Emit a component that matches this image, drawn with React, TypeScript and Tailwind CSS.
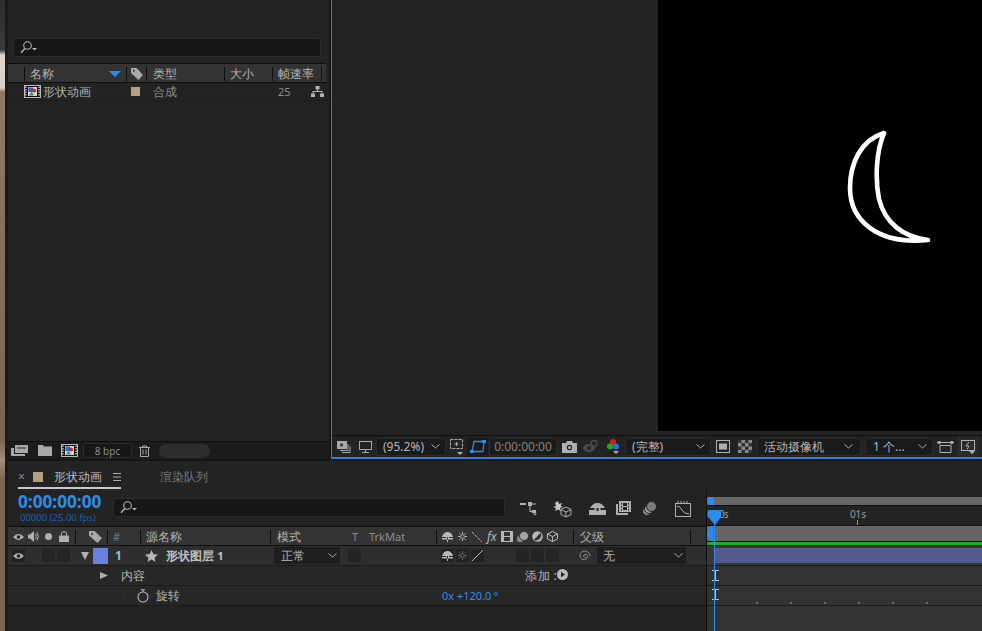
import React from "react";

const FONT = "font-['Noto_Sans','Noto_Sans_CJK_SC',sans-serif]";

function Sep() {
  return <div className="w-px h-[14px] bg-[#0e0e0e] shrink-0" />;
}

function Search({ className }: { className: string }) {
  return (
    <div className={"flex items-center pl-[6px] bg-[#171717] border border-[#2c2c2c] rounded-[3px] " + className}>
      <svg width="17" height="13" viewBox="0 0 17 13" fill="none" stroke="#b5b5b5" strokeWidth="1.1">
        <circle cx="7.5" cy="4.5" r="3.8" />
        <path d="M4.8 7.5 1 11.800" strokeWidth="1.4" />
        <path d="M12 7h5l-2.500 2.500z" fill="#b5b5b5" stroke="none" />
      </svg>
    </div>
  );
}

function Film() {
  return (
    <svg width="17" height="13" viewBox="0 0 17 13" className="shrink-0">
      <rect x="0.5" y="0.5" width="16" height="12" fill="#111" stroke="#b9b9b9" />
      <path d="M1.800 1.500v10M15.200 1.500v10" stroke="#b9b9b9" strokeWidth="1.600" strokeDasharray="1.500 1" />
      <rect x="4" y="2" width="9" height="9" fill="#d8d8d8" />
      <rect x="4.500" y="2.500" width="4.500" height="4.500" fill="#2a63c9" />
      <circle cx="10" cy="5.500" r="2.100" fill="#cc2b2b" />
      <path d="M5 10.500l2.500-4 2.500 4z" fill="#2c9c3c" />
    </svg>
  );
}

function Chevron({ color = "#a8a8a8" }: { color?: string }) {
  return (
    <svg width="9" height="5" viewBox="0 0 9 5" fill="none" stroke={color} strokeWidth="1" className="shrink-0">
      <path d="M.5.5l4 3.500 4-3.500" />
    </svg>
  );
}

function ProjectPanel() {
  return (
    <div className="w-[321px] shrink-0 flex flex-col bg-[#232323]">
      <div className="h-[38px] shrink-0" />
      <div className="px-[5px]">
        <Search className="h-[19px] w-[308px]" />
      </div>
      <div className="mt-[6px] mr-[3px] h-[20px] pt-[1px] shrink-0 flex items-center bg-[#333333] border-y border-[#0f0f0f] text-[12px] text-[#b4b4b4]">
        <div className="w-[17px] shrink-0 flex justify-end"><Sep /></div>
        <div className="w-[84px] shrink-0 pl-[5px] leading-none">名称</div>
        <svg width="12" height="6" viewBox="0 0 12 6" className="shrink-0 mr-[5px]"><path d="M0 0h12L6 6z" fill="#2d8ceb" /></svg>
        <Sep />
        <svg width="13" height="12" viewBox="0 0 13 12" className="ml-[3px] shrink-0"><path d="M1 0h5.500l6.500 7-4.500 5L1 5z" fill="#aaa" /><circle cx="3.800" cy="2.800" r="1" fill="#333" /></svg>
        <div className="ml-[3px]"><Sep /></div>
        <div className="w-[77px] shrink-0 pl-[6px] leading-none">类型</div>
        <Sep />
        <div className="w-[47px] shrink-0 pl-[5px] leading-none">大小</div>
        <Sep />
        <div className="w-[48px] shrink-0 pl-[5px] leading-none whitespace-nowrap">帧速率</div>
        <Sep />
      </div>
      <div className="h-[18px] shrink-0 flex items-center border-b border-[#1d1d1d] text-[12px] text-[#b0b0b0]">
        <div className="ml-[16px] shrink-0 flex"><Film /></div>
        <div className="w-[88px] ml-[2px] leading-none">形状动画</div>
        <div className="w-[9px] h-[9px] bg-[#b3a17f] shrink-0" />
        <div className="ml-[13px] w-[125px] text-[#8a8a8a] leading-none">合成</div>
        <div className="w-[33px] text-[11px] text-[#8d8d8d] leading-none">25</div>
        <svg width="13" height="11" viewBox="0 0 13 11" fill="#b4b4b4"><rect x="4.500" y="0" width="4" height="3.500" /><rect x="0" y="7.500" width="4" height="3.500" /><rect x="9" y="7.500" width="4" height="3.500" /><path d="M6 3.500h1V5h4.500v2.500h-1V6h-8v1.500h-1V5H6z" /></svg>
      </div>
      <div className="flex-1" />
      <div className="h-px bg-[#0f0f0f] shrink-0" />
      <div className="h-[17px] shrink-0 flex items-center bg-[#1c1c1c]">
        <svg width="17" height="11" viewBox="0 0 17 11" className="ml-[3px]" fill="#a8a8a8"><rect x="4" y="0" width="13" height="8" /><rect x="6" y="2.500" width="9" height="1" fill="#222" /><rect x="0" y="3" width="3" height="8" /><rect x="3" y="9" width="11" height="2" /></svg>
        <svg width="14" height="11" viewBox="0 0 14 11" className="ml-[10px]" fill="#a8a8a8"><path d="M0 0h5l1 1.500h8V11H0z" /></svg>
        <div className="ml-[9px] flex"><Film /></div>
        <div className="ml-[5px] w-[49px] h-[15px] rounded-[2px] bg-[#171717] border border-[#2c2c2c] text-[10px] leading-none text-[#8b8b8b] flex items-center justify-center">8 bpc</div>
        <svg width="11" height="12" viewBox="0 0 11 12" className="ml-[7px]" fill="none" stroke="#a8a8a8" strokeWidth="1"><path d="M0 2.500h11M3.500 2.500V1h4v1.500M1.500 2.500v9h8v-9M4 4.500v5M7 4.500v5" /></svg>
        <div className="ml-[9px] w-[51px] h-[14px] rounded-full bg-[#2e2e2e]" />
      </div>
    </div>
  );
}

function ToolBox({ className, children }: { className: string; children?: React.ReactNode }) {
  return (
    <div className={"h-[18px] shrink-0 rounded-[3px] bg-[#1b1b1b] border border-[#2b2b2b] flex items-center text-[12px] leading-none " + className}>
      {children}
    </div>
  );
}

function ViewerToolbar() {
  return (
    <div className="h-[24px] shrink-0 flex items-center bg-[#232323] border-t border-[#0f0f0f] border-b-2 border-b-[#2d7fd8]">
      <svg width="14" height="12" viewBox="0 0 14 12" className="ml-[5px] shrink-0" fill="none" stroke="#a8a8a8"><rect x=".5" y=".5" width="9" height="7" fill="#a8a8a8" /><path d="M11 3v6.500H3M13 5v6.500H5" /><path d="M3.500 2l3 2-3 2z" fill="#222" stroke="none" /></svg>
      <svg width="13" height="12" viewBox="0 0 13 12" className="ml-[8px] shrink-0" fill="none" stroke="#a8a8a8"><rect x=".5" y=".5" width="12" height="8" /><path d="M6.500 9v2M3 11.500h7" /></svg>
      <ToolBox className="ml-[4px] w-[70px] text-[#b6b6b6] justify-between pl-[6px] pr-[5px]"><span>(95.2%)</span><Chevron /></ToolBox>
      <svg width="15" height="17" viewBox="0 0 15 17" className="ml-[3px] shrink-0" fill="none" stroke="#b0b0b0"><rect x="1.500" y="1.500" width="12" height="9" strokeDasharray="3 1" /><path d="M7.500 4v4M5.500 6h4" /><path d="M8 14h6l-3 3z" fill="#b0b0b0" stroke="none" /></svg>
      <div className="ml-[3px] w-[21px] h-[20px] bg-[#1b1b1b] rounded-[2px] flex items-center justify-center shrink-0">
        <svg width="16" height="13" viewBox="0 0 16 13" fill="none" stroke="#2d8ceb" strokeWidth="1.300"><path d="M4 1.500h10L13 11.500H2z" /><path d="M0 10h4v3H0zM12 0h4v3h-4z" fill="#2d8ceb" stroke="none" /></svg>
      </div>
      <ToolBox className="ml-[1px] w-[68px] justify-center text-[#8a8174] text-[12px]">0:00:00:00</ToolBox>
      <svg width="15" height="12" viewBox="0 0 15 12" className="ml-[5px] shrink-0"><path d="M0 2h4l1-2h5l1 2h4v10H0z" fill="#b0b0b0" /><circle cx="7.500" cy="6.500" r="2.700" fill="#232323" /><circle cx="7.500" cy="6.500" r="1.500" fill="#b0b0b0" /></svg>
      <svg width="15" height="13" viewBox="0 0 15 13" className="ml-[6px] shrink-0"><ellipse cx="6" cy="8" rx="6" ry="4" fill="#4a4a4a" /><circle cx="6" cy="8" r="2" fill="#232323" /><circle cx="11" cy="3.500" r="3" fill="none" stroke="#4a4a4a" strokeWidth="1.500" /></svg>
      <svg width="12" height="15" viewBox="0 0 12 15" className="ml-[9px] shrink-0"><circle cx="6" cy="3" r="3" fill="#d81f1f" /><circle cx="3" cy="7.500" r="3" fill="#1eb01e" /><circle cx="9" cy="7.500" r="3" fill="#2e6fdc" /><path d="M6 12h6l-3 3z" fill="#b0b0b0" /></svg>
      <ToolBox className="ml-[6px] w-[86px] text-[#b6b6b6] justify-between pl-[6px] pr-[5px]"><span>(完整)</span><Chevron /></ToolBox>
      <svg width="14" height="13" viewBox="0 0 14 13" className="ml-[5px] shrink-0"><rect x=".5" y=".5" width="13" height="12" fill="none" stroke="#b0b0b0" /><rect x="3" y="3.500" width="8" height="6" fill="#b0b0b0" /></svg>
      <svg width="14" height="13" viewBox="0 0 14 13" className="ml-[8px] shrink-0"><rect width="14" height="13" fill="#8a8a8a" /><path d="M0 0h3.500v3H0zM7 0h3.500v3H7zM3.500 3H7v3.500H3.500zM10.500 3H14v3.500h-3.500zM0 6.500h3.500V10H0zM7 6.500h3.500V10H7zM3.500 10H7v3H3.500zM10.500 10H14v3h-3.500z" fill="#333" /></svg>
      <ToolBox className="ml-[5px] w-[104px] text-[#b6b6b6] justify-between pl-[6px] pr-[7px]"><span>活动摄像机</span><Chevron /></ToolBox>
      <ToolBox className="ml-[4px] w-[68px] text-[#b6b6b6] justify-between pl-[7px] pr-[5px]"><span>1 个...</span><Chevron /></ToolBox>
      <svg width="17" height="12" viewBox="0 0 17 12" className="ml-[4px] shrink-0" fill="none" stroke="#b0b0b0"><path d="M2 1.500h13M3 4.500h11v7H3z" /><path d="M0 1.500L3 0v3zM17 1.500L14 0v3z" fill="#b0b0b0" /></svg>
      <div className="ml-[4px] w-[20px] h-[20px] bg-[#2b2b2b] flex items-center justify-center shrink-0">
        <svg width="15" height="14" viewBox="0 0 15 14" fill="none" stroke="#b0b0b0"><rect x=".5" y=".5" width="13" height="10" /><path d="M8 2L5 6h3l-2 3.500" /><path d="M8 11h6l-3 3z" fill="#b0b0b0" stroke="none" /></svg>
      </div>
    </div>
  );
}

function Viewer() {
  return (
    <div className="flex-1 min-w-0 flex flex-col border-l border-[#2d7fd8] bg-[#232323] ml-[2px]">
      <div className="flex-1 min-h-0 flex justify-end items-stretch">
        <div className="w-[324px] bg-black flex items-start">
          <svg width="90" height="120" viewBox="0 0 90 120" className="ml-[185px] mt-[127px] shrink-0 blur-[0.5px]" fill="none" stroke="#fff" strokeWidth="4.600" strokeLinecap="round" strokeLinejoin="round">
            <path d="M41 6 C18 13 7 36 7 61 C7 93 34 118 85 113 C60 110 42 96 36 72 C32 52 33 25 41 6 Z" />
          </svg>
        </div>
      </div>
      <div className="h-[4px] shrink-0" />
      <ViewerToolbar />
    </div>
  );
}

function TimelineTabs() {
  return (
    <div className="h-[28px] shrink-0 flex bg-[#232323] text-[12px]">
      <div className="ml-[10px] w-[103px] h-[28px] pt-[6px] shrink-0 flex items-center border-b-2 border-[#c8c8c8]">
        <span className="w-[15px] text-[12px] leading-none text-[#8a8a8a]">×</span>
        <div className="w-[10px] h-[10px] bg-[#b3a17f] shrink-0" />
        <div className="ml-[11px] w-[48px] leading-none text-[#bdbdbd] whitespace-nowrap">形状动画</div>
        <svg width="8" height="8" viewBox="0 0 8 8" className="ml-[11px] shrink-0" stroke="#aaa"><path d="M0 .5h8M0 4h8M0 7.500h8" /></svg>
      </div>
      <div className="ml-[39px] pt-[10px] leading-[12px] text-[#777]">渲染队列</div>
    </div>
  );
}

function TimeRow() {
  return (
    <div className="h-[38px] shrink-0 flex border-b border-[#0f0f0f]">
      <div className="w-[105px] shrink-0 flex flex-col pl-[10px]">
        <div className="mt-[3px] text-[17.200px] font-bold leading-[20px] text-[#2d8ceb] font-['Liberation_Serif',serif] whitespace-nowrap">0:00:00:00</div>
        <div className="ml-[2px] text-[9.500px] leading-[12px] text-[#1f5fa8] whitespace-nowrap">00000 (25.00 fps)</div>
      </div>
      <Search className="h-[19px] w-[392px] mt-[9px] shrink-0" />
      <div className="flex items-start pt-[12px]">
        <svg width="18" height="15" viewBox="0 0 18 15" className="ml-[15px] shrink-0" fill="#b0b0b0"><path d="M0 2h6v2H0zM8 1h4v4H8zM12 2.500h4v1h-4zM9.500 5h1v5h1.500v1H9.500zM12 9h4v3h-4z" /><path d="M13 12.500h4l-2 2z" /></svg>
        <svg width="19" height="17" viewBox="0 0 19 17" className="ml-[15px] shrink-0" fill="none" stroke="#b0b0b0"><path d="M5 0l1 3 3-1-1.500 3 2.500 1-3 1 1 3-3-1.500L2 10l1-3-3-1 3-1-1-3z" fill="#c8c8c8" stroke="none" /><path d="M13 6l5 2.500v5L13 16l-5-2.500v-5zM8 8.500l5 2.500 5-2.500M13 11v5" /></svg>
        <svg width="17" height="13" viewBox="0 0 17 13" className="ml-[17px] mt-[1px] shrink-0" fill="#b0b0b0"><path d="M0 8h5.500V6H1q3-5 7.500-5T16 6h-4.500v2H17v5H0zM7.500 6v3h2V6z" /></svg>
        <svg width="15" height="14" viewBox="0 0 15 14" className="ml-[10px] shrink-0" fill="#b0b0b0"><path d="M3 0h12v11H3z" /><path d="M0 3h2v9h10v2H0z" /><path d="M5 2h1v1.500H5zM5 5h1v1.500H5zM5 8h1v1.500H5zM12 2h1v1.500h-1zM12 5h1v1.500h-1zM12 8h1v1.500h-1zM7 2h4v3H7zM7 6h4v3H7z" fill="#232323" /></svg>
        <svg width="15" height="15" viewBox="0 0 15 15" className="ml-[11px] shrink-0" stroke="#232323"><circle cx="5" cy="10" r="4.500" fill="#8a8a8a" /><circle cx="7" cy="8" r="4.500" fill="#a0a0a0" /><circle cx="9.500" cy="5.500" r="5" fill="#7d7d7d" /></svg>
        <svg width="16" height="16" viewBox="0 0 16 16" className="ml-[18px] shrink-0" fill="none" stroke="#b0b0b0"><rect x=".5" y="2.500" width="15" height="13" /><path d="M2 5q3 0 5 4t7 4" /><path d="M3 0v2M6 0v2M9 0v2M12 0v2" /></svg>
      </div>
    </div>
  );
}

function Eye({ color = "#b0b0b0" }: { color?: string }) {
  return (
    <svg width="11" height="8" viewBox="0 0 11 8" className="shrink-0"><path d="M0 4q5.500-6 11 0-5.500 6-11 0z" fill={color} /><circle cx="5.500" cy="4" r="1.800" fill="#222" /></svg>
  );
}

function Tile({ className = "" }: { className?: string }) {
  return <div className={"w-[13px] h-[13px] bg-[#242424] shrink-0 " + className} />;
}

function Pyramid({ color = "#b8b8b8" }: { color?: string }) {
  return (
    <svg width="11" height="10" viewBox="0 0 11 10" fill={color} className="shrink-0"><path d="M0 5q1.500-5 5.500-5t5.500 5H7v1h4v1.500H0V6h4V5zM5 5v5h1V5z" /></svg>
  );
}

function Gear({ color = "#b8b8b8" }: { color?: string }) {
  return (
    <svg width="9" height="9" viewBox="0 0 9 9" className="shrink-0" stroke={color} fill="none"><circle cx="4.500" cy="4.500" r="1.800" /><path d="M4.500 0v2M4.500 7v2M0 4.500h2M7 4.500h2M1.300 1.300l1.200 1.200M6.500 6.500l1.200 1.200M1.300 7.700l1.200-1.200M6.500 2.500l1.200-1.200" /></svg>
  );
}

function TimelineLeft() {
  return (
    <div className="w-[698px] shrink-0 flex flex-col text-[12px] text-[#b4b4b4]">
      <TimeRow />
      <div className="h-[19px] pt-[1px] shrink-0 flex items-center bg-[#333333] border-b border-[#0f0f0f]">
        <div className="ml-[5px] flex"><Eye /></div>
        <svg width="11" height="11" viewBox="0 0 11 11" className="ml-[4px] shrink-0" fill="#b0b0b0"><path d="M0 3.500h2L6 0v11L2 7.500H0z" /><path d="M7.500 3q1.500 2.500 0 5M9 1.500q2.500 4 0 8" fill="none" stroke="#b0b0b0" /></svg>
        <div className="ml-[6px] w-[7px] h-[7px] rounded-full bg-[#b0b0b0] shrink-0" />
        <svg width="10" height="11" viewBox="0 0 10 11" className="ml-[7px] shrink-0" fill="#b0b0b0"><rect y="4.500" width="10" height="6.500" /><path d="M2.500 4.500V3a2.500 2.500 0 015 0v1.500" fill="none" stroke="#b0b0b0" /></svg>
        <div className="ml-[6px]"><Sep /></div>
        <svg width="13" height="12" viewBox="0 0 13 12" className="ml-[13px] shrink-0" fill="#a8a8a8"><path d="M0 0h5.500l7.500 7-4.500 5L0 4.500z" /><circle cx="3" cy="3" r="1" fill="#333" /></svg>
        <div className="ml-[5px]"><Sep /></div>
        <div className="ml-[5px] w-[27px] shrink-0 text-[11px] leading-none text-[#6d87a0]">#</div>
        <Sep />
        <div className="ml-[5px] w-[124px] shrink-0 leading-none">源名称</div>
        <Sep />
        <div className="ml-[6px] w-[75px] shrink-0 leading-none">模式</div>
        <div className="text-[11px] leading-none w-[17px] shrink-0 text-[#8d8d8d]">T</div>
        <div className="w-[67px] shrink-0 text-[11px] leading-none text-[#8d8d8d]">TrkMat</div>
        <Sep />
        <div className="ml-[5px]"><Pyramid /></div>
        <div className="ml-[5px]"><Gear /></div>
        <svg width="10" height="10" viewBox="0 0 10 10" className="ml-[5px] shrink-0" stroke="#b8b8b8" strokeDasharray="3 1"><path d="M0 0l10 10" /></svg>
        <span className="ml-[5px] w-[11px] shrink-0 text-[12px] leading-none italic text-[#b4b4b4] font-['Liberation_Serif',serif]">fx</span>
        <svg width="12" height="11" viewBox="0 0 12 11" className="ml-[3px] shrink-0" fill="#b8b8b8"><path d="M0 0h12v11H0z" /><path d="M3 1h6v4H3zM3 6h6v4H3z" fill="#333" /></svg>
        <svg width="13" height="12" viewBox="0 0 13 12" className="ml-[3px] shrink-0" stroke="#333"><circle cx="4" cy="8" r="3.800" fill="#8a8a8a" /><circle cx="8" cy="5" r="4.500" fill="#a5a5a5" /></svg>
        <svg width="11" height="11" viewBox="0 0 11 11" className="ml-[3px] shrink-0"><circle cx="5.500" cy="5.500" r="5.200" fill="#b8b8b8" /><path d="M8.500 1.800A5.200 5.200 0 011.800 9z" fill="#333" /></svg>
        <svg width="11" height="11" viewBox="0 0 11 11" className="ml-[4px] shrink-0" fill="none" stroke="#b8b8b8"><path d="M5.500 .5l5 2.500v5l-5 2.500-5-2.500V3zM.5 3l5 2.500 5-2.500M5.500 5.500v5.500" /></svg>
        <div className="ml-[15px]"><Sep /></div>
        <div className="ml-[6px] w-[110px] shrink-0 leading-none">父级</div>
        <Sep />
      </div>
      <div className="h-[20px] shrink-0 flex items-center bg-[#2e2e2e] border-b border-[#1b1b1b]">
        <div className="ml-[4px] w-[13px] h-[13px] bg-[#222] flex items-center justify-center shrink-0"><Eye /></div>
        <Tile className="ml-[17px]" />
        <Tile className="ml-[2px]" />
        <svg width="8" height="8" viewBox="0 0 8 8" className="ml-[11px] shrink-0"><path d="M0 0h8L4 8z" fill="#b0b0b0" /></svg>
        <div className="ml-[4px] w-[15px] h-[16px] bg-[#6a81de] shrink-0" />
        <div className="ml-[7px] w-[23px] shrink-0 text-[12px] leading-none font-bold text-[#a8b4c2] font-['Liberation_Serif',serif]">1</div>
        <svg width="13" height="12" viewBox="0 0 12 11" className="ml-[7px] shrink-0"><path d="M6 0l1.800 3.800 4.200.4-3.200 2.800L9.700 11 6 8.800 2.300 11l.9-4L0 4.200l4.200-.4z" fill="#b8b8b8" /></svg>
        <div className="ml-[8px] w-[108px] shrink-0 leading-none font-bold text-[#c0c0c0] whitespace-nowrap">形状图层 <span className="text-[11px]">1</span></div>
        <div className="w-[66px] h-[17px] bg-[#1f1f1f] flex items-center justify-between pl-[7px] pr-[3px] shrink-0 leading-none"><span>正常</span><Chevron /></div>
        <Tile className="ml-[8px]" />
        <div className="w-[80px] shrink-0" />
        <div className="w-[13px] h-[13px] bg-[#222] flex items-center justify-center shrink-0"><Pyramid /></div>
        <div className="ml-[2px] w-[13px] h-[13px] bg-[#222] flex items-center justify-center shrink-0"><Gear color="#6a6a6a" /></div>
        <div className="ml-[2px] w-[13px] h-[13px] bg-[#222] flex items-center justify-center shrink-0">
          <svg width="11" height="11" viewBox="0 0 11 11" stroke="#b8b8b8"><path d="M0 11L11 0" /></svg>
        </div>
        <Tile className="ml-[32px]" />
        <Tile className="ml-[2px]" />
        <Tile className="ml-[2px]" />
        <svg width="12" height="12" viewBox="0 0 12 12" className="ml-[20px] shrink-0" fill="none" stroke="#8f8f8f"><path d="M6.500 7.500a1.500 1.500 0 01-1.500-2.500c1-1.300 3.500-.5 3.500 1.500 0 2.300-2.500 3.500-4.500 3C2 9 .8 7 1 5 1.300 2.500 3.500.8 6 1c2.500.2 4.800 2 5 5" /></svg>
        <div className="ml-[6px] w-[89px] h-[17px] bg-[#1f1f1f] flex items-center justify-between pl-[6px] pr-[3px] shrink-0 leading-none"><span>无</span><Chevron /></div>
      </div>
      <div className="h-[20px] shrink-0 flex items-center border-b border-[#1b1b1b] bg-[#272727]">
        <svg width="8" height="7" viewBox="0 0 8 7" className="ml-[92px] shrink-0"><path d="M0 0l8 3.500L0 7z" fill="#b0b0b0" /></svg>
        <div className="ml-[13px] w-[404px] shrink-0 leading-none">内容</div>
        <span className="w-[32px] shrink-0 leading-none whitespace-nowrap tracking-[0.5px]">添加 :</span>
        <svg width="11" height="11" viewBox="0 0 11 11" className="shrink-0 mb-[3px]"><circle cx="5.500" cy="5.500" r="5.500" fill="#bbb" /><path d="M4 2.800l4 2.700-4 2.700z" fill="#222" /></svg>
      </div>
      <div className="h-[20px] shrink-0 flex items-center border-b border-[#1b1b1b] bg-[#272727]">
        <div className="ml-[115px] w-[2px] h-px bg-[#3a3a3a] shrink-0" />
        <svg width="12" height="14" viewBox="0 0 12 14" className="ml-[12px] shrink-0" fill="none" stroke="#b8b8b8" strokeWidth="1.100"><circle cx="6" cy="8" r="5" /><path d="M4 .8h4M6 3V.8" /></svg>
        <div className="ml-[7px] w-[286px] shrink-0 leading-none">旋转</div>
        <div className="text-[11px] leading-none text-[#2d8ceb] whitespace-nowrap">0x +120.0<span className="ml-[2px]">°</span></div>
      </div>
      <div className="flex-1" />
    </div>
  );
}

function IBeam() {
  return (
    <svg width="7" height="11" viewBox="0 0 7 11" stroke="#c0c0c0" fill="none" className="shrink-0"><path d="M0 .5h7M0 10.500h7M3.500 0v11M2.500 0v11" /></svg>
  );
}

function TimelineRight() {
  const ticks = [0, 1, 2, 3, 4, 5];
  return (
    <div className="flex-1 min-w-0 flex flex-col relative border-l border-[#0f0f0f]">
      <div className="h-[8px] shrink-0" />
      <div className="h-[9px] shrink-0 bg-[#686868] border-b border-[#0f0f0f]">
        <div className="w-[7px] h-[8px] rounded-l-full bg-[#2d8ceb]" />
      </div>
      <div className="h-[20px] shrink-0 border-b border-[#0f0f0f] flex flex-col">
        <div className="h-[2px] shrink-0" />
        <div className="flex text-[10px] leading-[12px] text-[#9a9a9a]">
          <span className="w-[136px] shrink-0 tracking-[-0.8px]">0:00s</span>
          <span className="w-[30px] text-center shrink-0">01s</span>
        </div>
        <div className="ml-[150px] w-px h-[5px] bg-[#999]" />
      </div>
      <div className="h-[20px] shrink-0 flex flex-col bg-[#0f0f0f]">
        <div className="h-[15px] shrink-0 bg-[#666666]">
          <div className="w-[6px] h-[15px] rounded-l-full bg-[#2d8ceb]" />
        </div>
        <div className="h-[3px] mt-px shrink-0 bg-[#14b514]" />
      </div>
      <div className="h-[20px] shrink-0 bg-[#383838] border-b border-[#1b1b1b] pl-[7px] pt-[2px]">
        <div className="h-[15px] bg-[#525b8c]" />
      </div>
      <div className="h-[20px] shrink-0 flex items-center pl-[5px] bg-[#333] border-b border-[#1b1b1b]">
        <IBeam />
      </div>
      <div className="h-[20px] shrink-0 flex items-start pl-[5px] pt-[3px] bg-[#333] border-b border-[#1b1b1b]">
        <IBeam />
        <div className="flex gap-[27px] ml-[34px] mt-[13px]">
          {ticks.map((t) => (
            <div key={t} className="w-[7px] flex justify-center"><div className="w-[2px] h-[2px] bg-[#666]" /></div>
          ))}
        </div>
      </div>
      <div className="flex-1 bg-[#333]" />
      <div className="absolute left-[7px] top-[21px] bottom-0 w-px bg-[#2d8ceb]" />
      <svg width="13" height="15" viewBox="0 0 13 15" className="absolute left-[1px] top-[21px]"><path d="M0 0h13v7l-6 8-7-8z" fill="#2d8ceb" /></svg>
    </div>
  );
}

function Timeline() {
  return (
    <div className="h-[170px] shrink-0 flex flex-col bg-[#232323] mt-[2px]">
      <TimelineTabs />
      <div className="flex-1 min-h-0 flex">
        <TimelineLeft />
        <TimelineRight />
      </div>
    </div>
  );
}

export default function App() {
  return (
    <div className={"w-[982px] h-[631px] flex overflow-hidden bg-[#161616] " + FONT}>
      <div className="w-[5px] shrink-0 bg-[linear-gradient(to_bottom,#2e2e2c_0,#3a3a38_50px,#dcd6cc_55px,#d8d0c4_88px,#8d7866_92px,#7b6552_440px,#a08d7c_460px,#7b6552_480px,#7b6552_631px)]" />
      <div className="w-[3px] shrink-0 bg-[#1a1a1a]" />
      <div className="flex-1 min-w-0 flex flex-col">
        <div className="flex-1 min-h-0 flex">
          <ProjectPanel />
          <Viewer />
        </div>
        <Timeline />
      </div>
    </div>
  );
}
